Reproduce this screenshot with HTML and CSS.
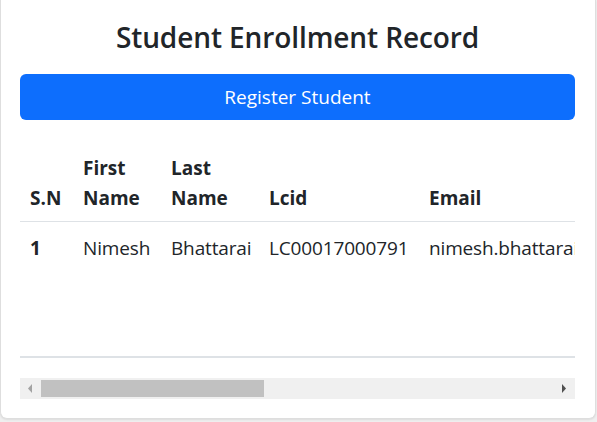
FILE: index.html
```html
<!DOCTYPE html>
<html lang="en">
<head>
<meta charset="utf-8">
<title>Student Enrollment Record</title>
<link rel="stylesheet" href="styles.css">
</head>
<body>
<div class="card">
  <h2 class="title">Student Enrollment Record</h2>
  <button class="btn-register" type="button">Register Student</button>
  <div class="table-wrap">
    <table class="records">
      <colgroup>
        <col class="c-sn"><col class="c-first"><col class="c-last"><col class="c-lcid"><col class="c-email"><col class="c-phone"><col class="c-action">
      </colgroup>
      <thead>
        <tr>
          <th>S.N</th>
          <th>First Name</th>
          <th>Last Name</th>
          <th>Lcid</th>
          <th>Email</th>
          <th>Phone</th>
          <th>Action</th>
        </tr>
      </thead>
      <tbody>
        <tr class="data-row">
          <th>1</th>
          <td>Nimesh</td>
          <td>Bhattarai</td>
          <td>LC00017000791</td>
          <td>nimesh.bhattarai@gmail.com</td>
          <td>9800000000</td>
          <td>Edit Delete</td>
        </tr>
      </tbody>
    </table>
  </div>
  <div class="hscroll">
    <span class="arrow">
      <svg width="5" height="9" viewBox="0 0 5 9"><polygon points="4,0 4,9 0,4.5" fill="#a3a3a3"/></svg>
    </span>
    <div class="track">
      <div class="thumb"></div>
    </div>
    <span class="arrow">
      <svg width="5" height="9" viewBox="0 0 5 9"><polygon points="0,0 0,9 4,4.5" fill="#505050"/></svg>
    </span>
  </div>
</div>
</body>
</html>
```

FILE: styles.css
```css
html, body {
  margin: 0;
  padding: 0;
}
body {
  background: #efefef;
  font-family: "Open Sans", "Noto Sans", sans-serif;
  color: #212529;
  height: 422px;
  overflow: hidden;
}
.card {
  background: #fff;
  width: 596px;
  box-sizing: border-box;
  border: 1px solid #dedede;
  border-top: 0;
  border-radius: 0 0 7px 7px;
  box-shadow: 0 1px 2px rgba(0, 0, 0, 0.08);
  padding: 20px 20px 19px 19px;
}
.title {
  margin: 0 0 20px;
  text-align: center;
  font-size: 28px;
  line-height: 34px;
  font-weight: 600;
  letter-spacing: -0.1px;
}
.btn-register {
  display: block;
  width: 100%;
  height: 46px;
  border: 0;
  border-radius: 6px;
  background: #0d6efd;
  color: #fff;
  font-family: inherit;
  font-size: 19px;
  line-height: 30px;
  padding: 0;
}
.table-wrap {
  margin-top: 23px;
  overflow: hidden;
  width: 100%;
}
.records {
  table-layout: fixed;
  width: 1275px;
  border-collapse: collapse;
  font-size: 19px;
  line-height: 30px;
}
.c-sn { width: 53px; }
.c-first { width: 88px; }
.c-last { width: 98px; }
.c-lcid { width: 160px; }
.c-email { width: 330px; }
.c-phone { width: 260px; }
.c-action { width: 286px; }
.records th,
.records td {
  text-align: left;
}
.records thead th {
  padding: 10px 10px 8px;
  font-weight: 700;
  vertical-align: bottom;
  border-bottom: 1px solid #dee2e6;
}
.records tbody th,
.records tbody td {
  padding: 11px 10px 10px;
  vertical-align: top;
  border-bottom: 2px solid #dee2e6;
  white-space: nowrap;
  letter-spacing: -0.15px;
}
.records tbody th {
  font-weight: 700;
}
.data-row {
  height: 135px;
}
.hscroll {
  margin-top: 20px;
  height: 21px;
  background: #f0f0f0;
  display: flex;
  align-items: center;
}
.arrow {
  width: 21px;
  height: 21px;
  display: flex;
  align-items: center;
  justify-content: center;
}
.track {
  flex: 1;
  height: 17px;
}
.thumb {
  width: 223px;
  height: 17px;
  background: #c1c1c1;
}
```
